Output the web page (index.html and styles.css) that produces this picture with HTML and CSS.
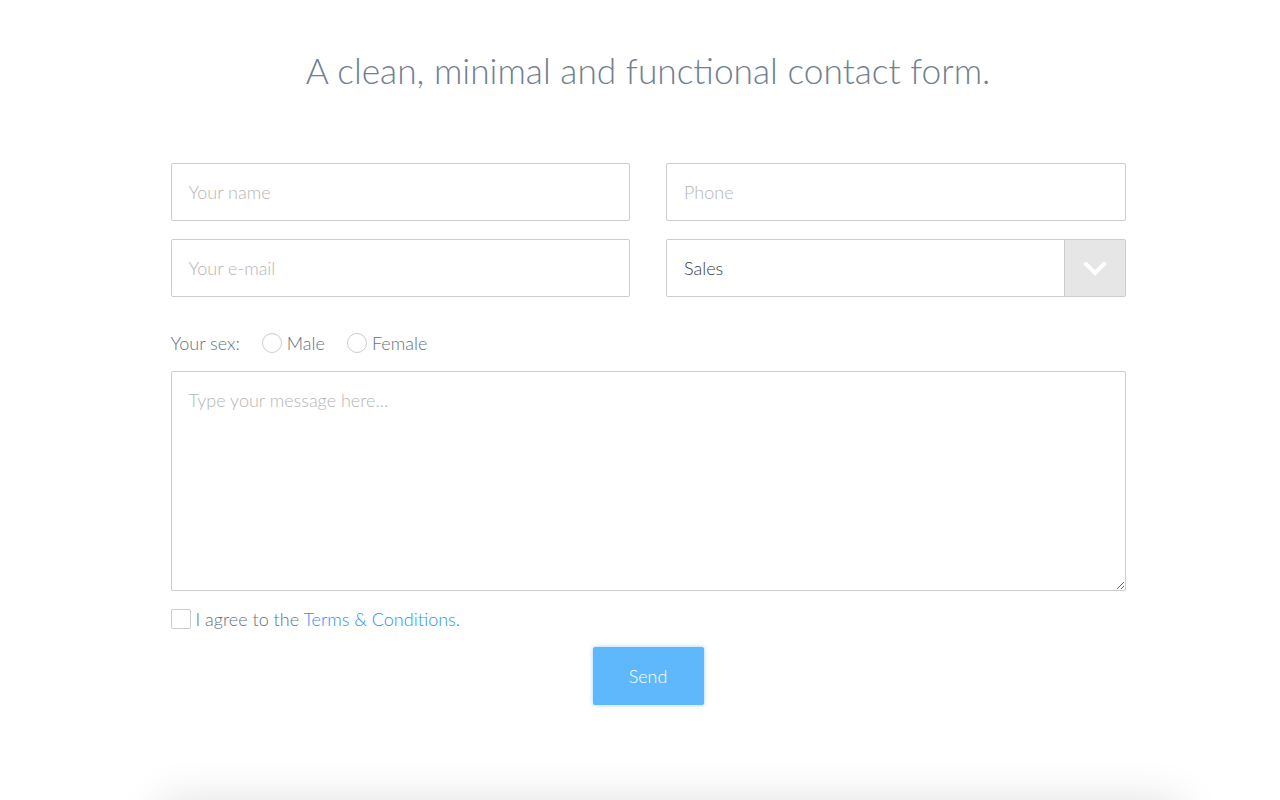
FILE: index.html
```html
<!DOCTYPE html>
<html lang="en">
<head>
    <meta charset="UTF-8">
    <meta name="viewport" content="width=device-width, initial-scale=1.0">
    <title>Contact form</title>
    <link rel="stylesheet" href="styles.css">
</head>
<body>
    <div class="page">
        <h1>A clean, minimal and functional contact form.</h1>

        <form class="contact-form" onsubmit="return false;">
            <div class="field-grid">
                <input type="text" class="field" placeholder="Your name">
                <input type="text" class="field" placeholder="Phone">
                <input type="email" class="field" placeholder="Your e-mail">
                <div class="select-box">
                    <select class="select">
                        <option>Sales</option>
                        <option>Support</option>
                        <option>Billing</option>
                    </select>
                    <span class="select-arrow">
                        <svg width="24" height="14" viewBox="0 0 24 14">
                            <path d="M3 2 L12 11 L21 2" fill="none" stroke="#fff" stroke-width="4" stroke-linecap="square"/>
                        </svg>
                    </span>
                </div>
            </div>

            <div class="sex-row">
                <span class="sex-label">Your sex:</span>
                <label class="radio"><input type="radio" name="sex"> Male</label>
                <label class="radio"><input type="radio" name="sex"> Female</label>
            </div>

            <textarea class="message" placeholder="Type your message here..."></textarea>

            <label class="agree">
                <input type="checkbox">
                <span>I agree to the <a href="#">Terms &amp; Conditions</a>.</span>
            </label>

            <div class="actions">
                <button type="submit" class="send">Send</button>
            </div>
        </form>
    </div>
    <div class="next-section"></div>
</body>
</html>
```

FILE: styles.css
```css
:root {
    --text-color: #708090;
    --label-color: #62717f;
    --border-color: #cccccc;
    --placeholder-color: #b5b5b5;
    --link-color: #1f92f0;
    --button-color: #5fb8fb;
}

* {
    margin: 0;
    padding: 0;
    box-sizing: border-box;
}

body {
    font-family: Lato, "Open Sans", sans-serif;
    color: var(--text-color);
    background: #ffffff;
    overflow: hidden;
    height: 800px;
}

.page {
    width: 955px;
    margin: 0 auto;
    padding-top: 49px;
    position: relative;
    left: 8px;
}

h1 {
    font-weight: 300;
    font-size: 35.3px;
    line-height: 44px;
    text-align: center;
    color: var(--text-color);
    margin-bottom: 70px;
}

.field-grid {
    display: grid;
    grid-template-columns: 1fr 1fr;
    column-gap: 36px;
    row-gap: 18px;
}

.field,
.message {
    width: 100%;
    height: 58px;
    border: 1px solid var(--border-color);
    border-radius: 2px;
    padding: 0 17px;
    font-family: inherit;
    font-size: 18px;
    font-weight: 300;
    color: #555;
    outline: none;
}

.field::placeholder,
.message::placeholder {
    color: var(--placeholder-color);
    font-weight: 300;
}

.select-box {
    display: flex;
    height: 58px;
    border: 1px solid var(--border-color);
    border-radius: 2px;
    overflow: hidden;
}

.select {
    flex: 1;
    appearance: none;
    -webkit-appearance: none;
    border: none;
    background: #fff;
    padding: 0 17px;
    font-family: inherit;
    font-size: 18px;
    font-weight: 300;
    color: #3a3a3a;
    outline: none;
}

.select-arrow {
    width: 61px;
    background: #e6e6e6;
    border-left: 1px solid var(--border-color);
    display: flex;
    align-items: center;
    justify-content: center;
    padding-top: 2px;
}

.sex-row {
    display: flex;
    align-items: center;
    height: 26px;
    margin-top: 33px;
    font-size: 18px;
    font-weight: 300;
    color: var(--label-color);
}

.sex-label {
    margin-right: 22px;
}

.radio {
    display: flex;
    align-items: center;
    gap: 5px;
    margin-right: 22px;
    cursor: pointer;
}

.radio input {
    appearance: none;
    -webkit-appearance: none;
    width: 20px;
    height: 20px;
    border: 1px solid var(--border-color);
    border-radius: 50%;
    margin: 0;
}

.message {
    display: block;
    height: 220px;
    margin-top: 15px;
    padding: 16px 17px;
    resize: vertical;
    line-height: 24px;
}

.agree {
    display: flex;
    align-items: center;
    gap: 5px;
    margin-top: 17px;
    font-size: 18px;
    font-weight: 300;
    height: 22px;
    color: var(--label-color);
    cursor: pointer;
}

.agree input {
    appearance: none;
    -webkit-appearance: none;
    width: 20px;
    height: 20px;
    border: 1px solid var(--border-color);
    border-radius: 2px;
    margin: 0;
}

.agree a {
    color: var(--link-color);
    text-decoration: none;
}

.actions {
    display: flex;
    justify-content: center;
    margin-top: 17px;
}

.send {
    width: 111px;
    height: 58px;
    background: var(--button-color);
    color: #fff;
    border: none;
    border-radius: 2px;
    font-family: inherit;
    font-size: 18px;
    font-weight: 300;
    box-shadow: 0 0 4px rgba(95, 184, 251, 0.6);
    cursor: pointer;
}

.next-section {
    width: 1020px;
    height: 200px;
    margin: 0 auto;
    position: relative;
    top: 95px;
    left: 30px;
    background: #fff;
    box-shadow: 0 0 40px rgba(0, 0, 0, 0.12);
}
```
